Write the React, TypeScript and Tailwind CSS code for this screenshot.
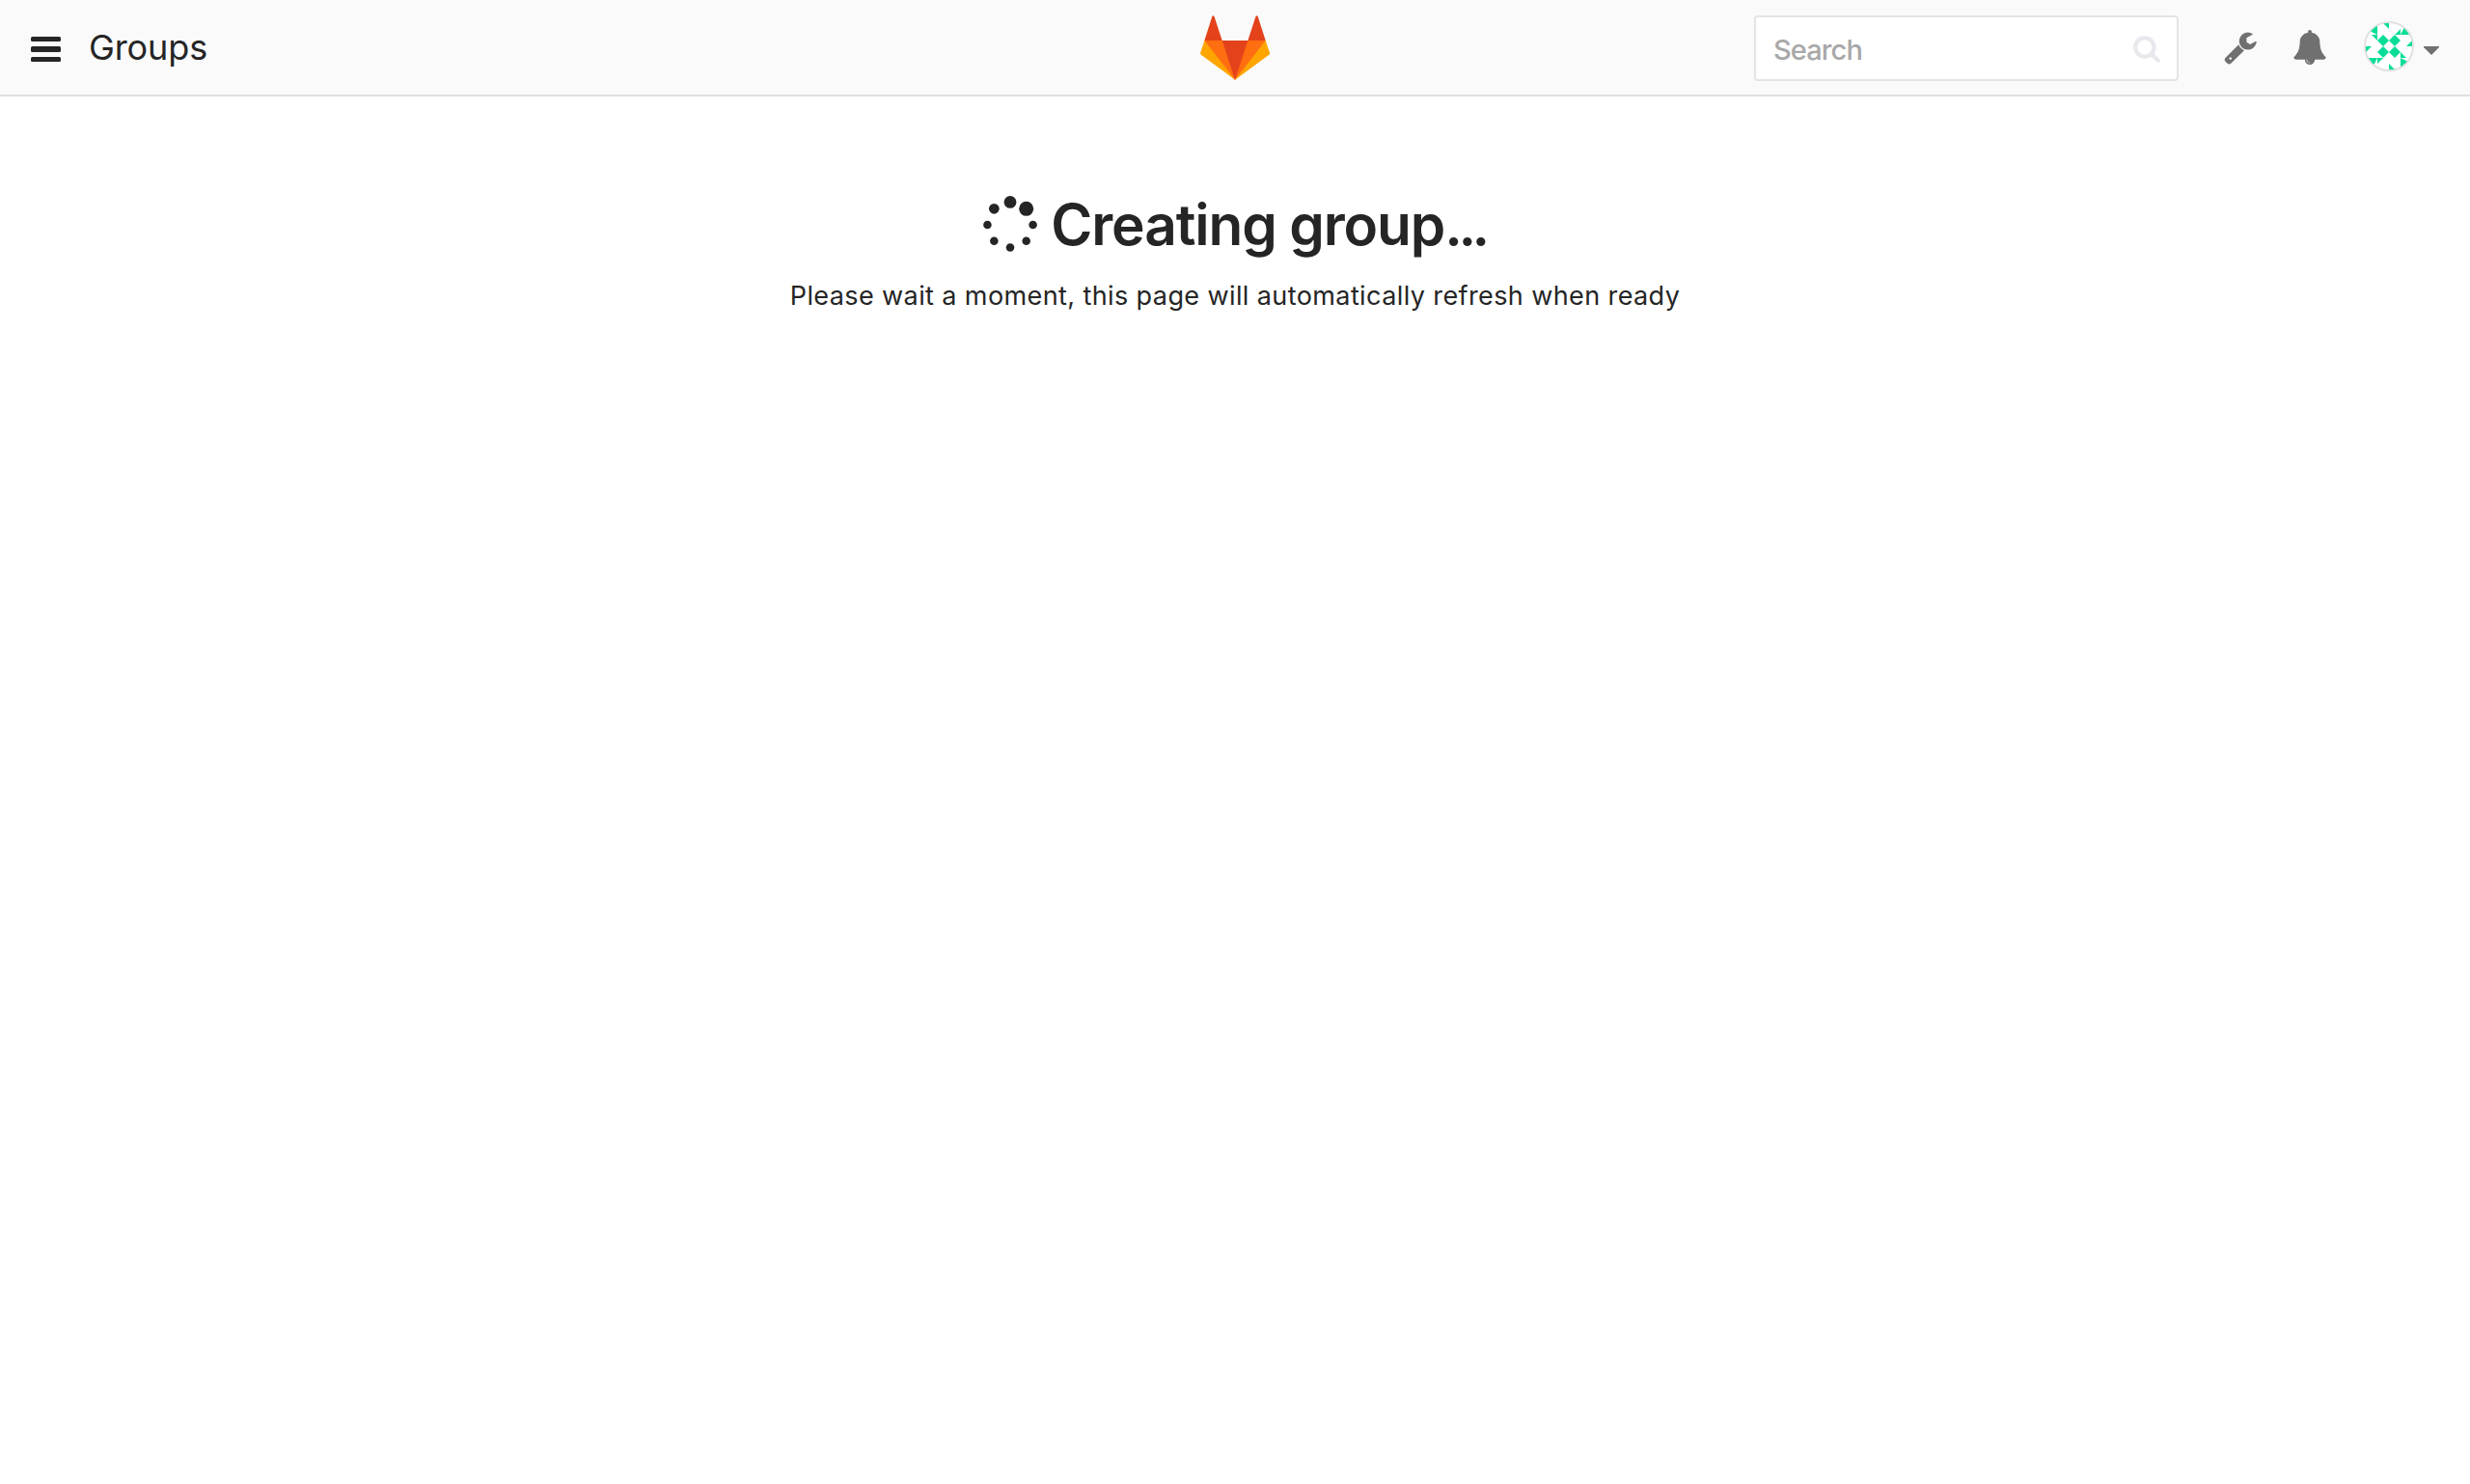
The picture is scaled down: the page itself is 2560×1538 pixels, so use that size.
import React from "react";

const WRENCH =
  "M448 1472q0-26-19-45t-45-19-45 19-19 45 19 45 45 19 45-19 19-45zm644-420l-682 682q-37 37-90 37-52 0-91-37l-106-108q-38-36-38-90 0-53 38-91l681-681q39 98 114.5 173.5t173.5 114.5zm634-435q0 39-23 106-47 134-164.5 217.5t-258.5 83.5q-185 0-316.5-131.5t-131.5-316.5 131.5-316.5 316.5-131.5q58 0 121.5 16.5t107.5 46.5q16 11 16 28t-16 28l-293 169v224l193 107q5-3 79-48.5t135.5-81 70.5-35.5q15 0 23.5 10t8.5 25z";
const BELL =
  "M912 1696q0-16-16-16-59 0-101.5-42.5t-42.5-101.5q0-16-16-16t-16 16q0 73 51.5 124.5t124.5 51.5q16 0 16-16zm816-288q0 52-38 90t-90 38h-448q0 106-75 181t-181 75-181-75-75-181h-448q-52 0-90-38t-38-90q50-42 91-88t85-119.5 74.5-158.5 50-206 19.5-260q0-152 117-282.5t307-158.5q-8-19-8-39 0-40 28-68t68-28 68 28 28 68q0 20-8 39 190 28 307 158.5t117 282.5q0 139 19.5 260t50 206 74.5 158.5 85 119.5 91 88z";
const SEARCH =
  "M1216 832q0-185-131.5-316.5t-316.5-131.5-316.5 131.5-131.5 316.5 131.5 316.5 316.5 131.5 316.5-131.5 131.5-316.5zm512 832q0 52-38 90t-90 38q-54 0-90-38l-343-342q-179 124-399 124-143 0-273.5-55.5t-225-150-150-225-55.5-273.5 55.5-273.5 150-225 225-150 273.5-55.5 273.5 55.5 225 150 150 225 55.5 273.5q0 220-124 399l343 343q37 37 37 90z";

function Glyph({ d, className }: { d: string; className: string }) {
  return (
    <svg viewBox="0 0 1792 1792" className={`shrink-0 fill-current ${className}`}>
      <path d={d} />
    </svg>
  );
}

function Logo() {
  return (
    <svg viewBox="42 48 216 200" className="mt-4 h-[66.7px] w-[72px] shrink-0">
      <path fill="#ffa500" d="M55 126 42.5 164q-1 4 2 6.500L150 248 256 170.500q3-2.500 2-6.500L245 126Z" />
      <path fill="#ff6e10" d="M55 126H245L150 248Z" />
      <path fill="#e3421b" d="M110 126H190L150 248Z" />
      <path fill="#e3421b" d="M55 126 79 51q3-5 6.500 0L110 126ZM190 126 214.500 51q3.500-5 6.500 0L245 126Z" />
    </svg>
  );
}

function Avatar() {
  return (
    <svg viewBox="-78 -78 156 156" className="size-[52px] shrink-0">
      <defs>
        <clipPath id="avatar-round">
          <circle r="73" />
        </clipPath>
      </defs>
      <circle r="75" fill="#fff" stroke="#e1e1e1" strokeWidth="6" />
      <g clipPath="url(#avatar-round)" fill="#07dd99">
        {[0, 90, 180, 270].map((angle) => (
          <g key={angle} transform={`rotate(${angle})`}>
            <path d="M-36-18-18-36 0-18-18 0Z" />
            <path d="M-18-72H0V-54ZM18-36 36-54V-36Z" />
            <path d="M-36-72V-36L-72-54Z" />
          </g>
        ))}
      </g>
    </svg>
  );
}

const DOTS = [
  [398, 1394, 128],
  [896, 1600, 128],
  [192, 896, 128],
  [1394, 1394, 128],
  [398, 398, 160],
  [1600, 896, 128],
  [896, 192, 192],
  [1394, 398, 224],
];

function Spinner() {
  return (
    <svg viewBox="0 0 1792 1792" className="mt-[0.5px] size-[60px] shrink-0 overflow-visible fill-current">
      {DOTS.map(([cx, cy, r]) => (
        <circle key={`${cx}-${cy}`} cx={cx} cy={cy} r={r} />
      ))}
    </svg>
  );
}

export default function App() {
  return (
    <div className="min-h-[1538px] bg-white font-['Inter',sans-serif] text-[#252525]">
      <header className="grid h-[100px] grid-cols-[1fr_72px_1fr] border-b-2 border-[#e1e1e1] bg-[#fafafa]">
        <div className="flex items-start pl-8">
          <button className="mt-[38px] flex w-[31px] flex-col gap-[5.3px]" aria-label="Menu">
            <span className="h-[5.200px] w-full rounded-[1.500px] bg-[#252525]" />
            <span className="h-[5.200px] w-full rounded-[1.500px] bg-[#252525]" />
            <span className="h-[5.200px] w-full rounded-[1.500px] bg-[#252525]" />
          </button>
          <h1 className="mt-[27px] ml-[29px] text-[36px] leading-[44px] tracking-[-0.1px]">Groups</h1>
        </div>
        <Logo />
        <div className="flex items-start justify-end pr-8">
          <div className="mt-4 flex h-[68px] w-[440px] items-start justify-between rounded-[4px] border-2 border-[#e4e4e4] bg-white pr-[16px] pl-[18px]">
            <span className="mt-[16px] text-[29px] leading-[36px] font-medium tracking-[-0.9px] text-[#a8a8a8]">Search</span>
            <Glyph d={SEARCH} className="mt-[17px] size-[30px] text-[#e7e9ed]" />
          </div>
          <Glyph d={WRENCH} className="mt-[31px] ml-[46px] size-9 text-[#707070]" />
          <Glyph d={BELL} className="mt-[31px] ml-9 size-9 text-[#707070]" />
          <div className="mt-[22px] ml-[38px] flex">
            <Avatar />
            <svg viewBox="0 0 16 9" className="mt-[26px] ml-[10px] h-[9px] w-4 fill-[#707070]">
              <path d="M0 0H16V1L8 9 0 1Z" />
            </svg>
          </div>
        </div>
      </header>
      <main className="flex flex-col items-center pt-[102px]">
        <div className="flex items-start">
          <Spinner />
          <h2 className="-mt-px mr-[3px] ml-[12px] text-[58.5px] leading-[64px] font-semibold tracking-[-1.1px] whitespace-nowrap">
            Creating group<span className="tracking-[-4.5px]">...</span>
          </h2>
        </div>
        <p className="mt-[21.5px] text-[27px] leading-[40px] tracking-[0.4px] whitespace-nowrap">
          Please wait a moment, this page will automatically refresh when ready
        </p>
      </main>
    </div>
  );
}
